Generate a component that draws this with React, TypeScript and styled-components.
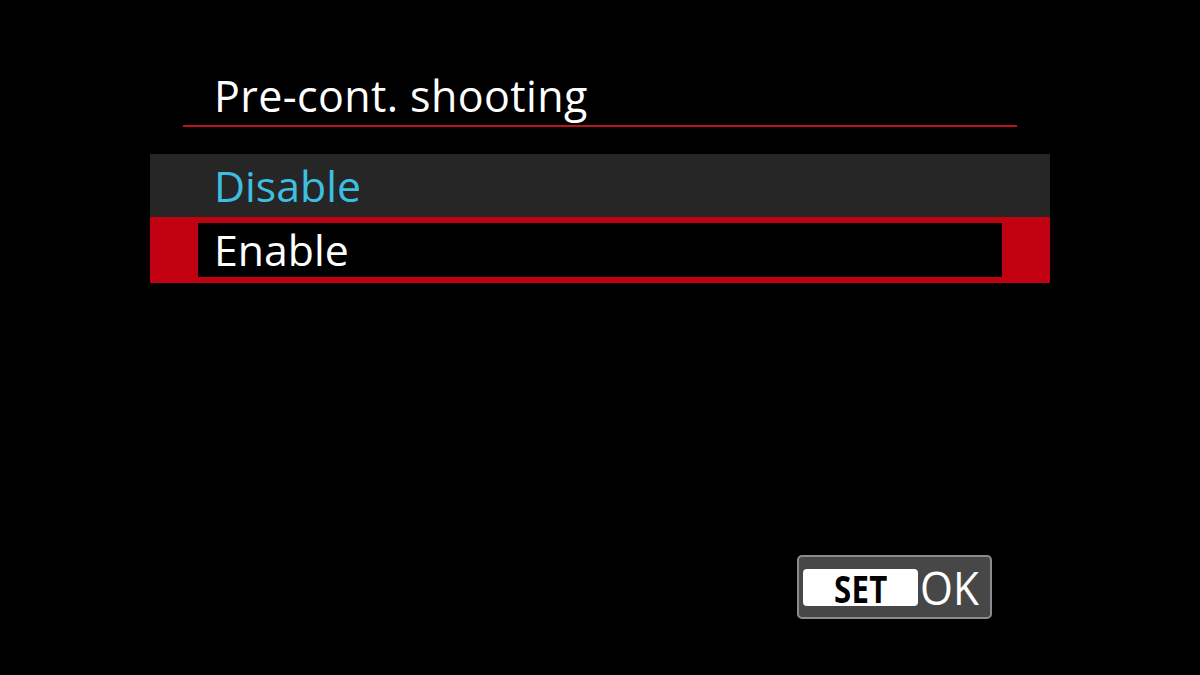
import React from "react";
import styled, { createGlobalStyle } from "styled-components";

const Global = createGlobalStyle`
  html, body { margin: 0; padding: 0; background: #000; }
  body { font-family: "Open Sans", "Noto Sans", sans-serif; }
`;

const Screen = styled.div`
  width: 1200px;
  height: 675px;
  background: #000;
  display: flex;
  flex-direction: column;
  padding: 75px 150px 0 150px;
  box-sizing: border-box;
  overflow: hidden;
`;

const Title = styled.div`
  height: 42px;
  line-height: 42px;
  font-size: 43px;
  letter-spacing: 0.4px;
  color: #fff;
  padding-left: 64px;
  white-space: nowrap;
`;

const Divider = styled.div`
  height: 2px;
  margin: 8px 33px 0 33px;
  background: #bb121c;
`;

const List = styled.div`
  margin-top: 27px;
  display: flex;
  flex-direction: column;
`;

const Row = styled.div<{ $color: string }>`
  height: 63px;
  line-height: 63px;
  background: #262626;
  padding-left: 64px;
  font-size: 42.8px;
  color: ${(p) => p.$color};
`;

const SelectedRow = styled.div`
  height: 66px;
  box-sizing: border-box;
  background: #c10010;
  padding: 6px 48px;
`;

const SelectedInner = styled.div`
  height: 54px;
  line-height: 54px;
  background: #000;
  padding-left: 16px;
  font-size: 42.8px;
  color: #fff;
`;

const Footer = styled.div`
  margin-top: 272px;
  display: flex;
  justify-content: flex-end;
  padding-right: 58px;
`;

const OkButton = styled.div`
  width: 195px;
  height: 64px;
  box-sizing: border-box;
  background: #474747;
  border: 2px solid #8c8c8c;
  border-radius: 5px;
  display: flex;
  align-items: center;
  padding-left: 4px;
`;

const SetKey = styled.div`
  width: 115px;
  height: 37px;
  background: #fff;
  border-radius: 4px;
  display: flex;
  align-items: center;
  justify-content: center;
  margin-top: 1px;
`;

const SetLabel = styled.span`
  display: inline-block;
  font-size: 38px;
  font-weight: 700;
  color: #000;
  transform: scaleX(0.82);
  line-height: 1;
  letter-spacing: 0.5px;
`;

const OkLabel = styled.span`
  display: inline-block;
  font-size: 46px;
  color: #fff;
  line-height: 1;
  margin-left: 2px;
  transform: scaleX(0.92);
  transform-origin: left center;
`;

export default function App() {
  return (
    <>
      <Global />
      <Screen>
        <Title>Pre-cont. shooting</Title>
        <Divider />
        <List>
          <Row $color="#3dbfe2">Disable</Row>
          <SelectedRow>
            <SelectedInner>Enable</SelectedInner>
          </SelectedRow>
        </List>
        <Footer>
          <OkButton>
            <SetKey>
              <SetLabel>SET</SetLabel>
            </SetKey>
            <OkLabel>OK</OkLabel>
          </OkButton>
        </Footer>
      </Screen>
    </>
  );
}
